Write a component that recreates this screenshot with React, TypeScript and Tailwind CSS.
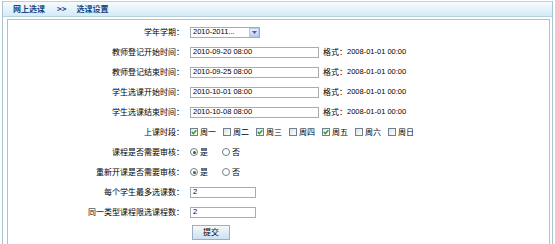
const CN = "font-['SimSun','Noto_Sans_CJK_SC',sans-serif]";
const NUM = "font-['Liberation_Sans',sans-serif]";

const days = [
  { name: "周一", on: true },
  { name: "周二", on: false },
  { name: "周三", on: true },
  { name: "周四", on: false },
  { name: "周五", on: true },
  { name: "周六", on: false },
  { name: "周日", on: false },
];

const Box = ({ on }: { on: boolean }) => (
  <span className="inline-flex items-center justify-center w-[8px] h-[8px] border border-[#6f8190] bg-gradient-to-br from-[#e2e2dc] to-white">
    {on && (
      <svg width="6" height="6" viewBox="0 0 6 6">
        <path d="M0.8 3 L2.4 4.6 L5.3 1.2" stroke="#23a323" strokeWidth="1.4" fill="none" />
      </svg>
    )}
  </span>
);

const Radio = ({ on }: { on: boolean }) => (
  <span className="inline-flex items-center justify-center w-[8px] h-[8px] rounded-full border border-[#6f8190] bg-white">
    {on && <span className="w-[3px] h-[3px] rounded-full bg-[#2d6a2d]" />}
  </span>
);

const TextBox = ({ value, w = "w-[129px]" }: { value: string; w?: string }) => (
  <div className={`${w} h-[11px] border border-[#a5acb2] bg-white pl-[2px] flex items-center whitespace-nowrap text-[7.5px] leading-none text-black ${NUM}`}>
    {value}
  </div>
);

const Row = ({ label, children }: { label: string; children: React.ReactNode }) => (
  <div className="flex items-center h-[20px] whitespace-nowrap">
    <div className="w-[176px] text-right text-[8px] leading-none text-black">{label}</div>
    <div className="ml-[6px] flex items-center">{children}</div>
  </div>
);

const TimeRow = ({ label, value }: { label: string; value: string }) => (
  <Row label={label}>
    <TextBox value={value} />
    <span className="ml-[4px] text-[8px] leading-none">格式：</span>
    <span className={`text-[7.5px] leading-none ${NUM}`}>2008-01-01 00:00</span>
  </Row>
);

const YesNo = () => (
  <>
    <span className="flex items-center text-[8px] leading-none">
      <Radio on />
      <span className="ml-[2px]">是</span>
    </span>
    <span className="flex items-center text-[8px] leading-none ml-[14px]">
      <Radio on={false} />
      <span className="ml-[2px]">否</span>
    </span>
  </>
);

export default function App() {
  return (
    <div className={`w-[555px] h-[244px] bg-white overflow-hidden ${CN}`}>
      <div className="ml-[2px] w-[551px] h-full border-l border-r border-[#a8c4cf]">
        {/* header */}
        <div className="mt-[1px] h-[16px] border-t border-b border-[#b7d3de] bg-gradient-to-b from-[#f7fbfd] to-[#d4ebf6] flex items-center pl-[10px] text-[8px] leading-none font-bold text-[#1b4680]">
          <span>网上选课</span>
          <span className="ml-[12px]">&gt;&gt;</span>
          <span className="ml-[10px]">选课设置</span>
        </div>
        {/* content */}
        <div className="mt-[2px] ml-[4px] w-[543px] h-full border border-[#a8c4cf] pt-[2px]">
          <Row label="学年学期：">
            <div className="w-[70px] h-[11px] border border-[#a5acb2] bg-white flex items-center">
              <span className={`flex-1 pl-[2px] text-[7.5px] leading-none ${NUM}`}>2010-2011...</span>
              <span className="w-[10px] h-[9px] bg-gradient-to-b from-[#e9f0fc] to-[#bccff3] border border-[#b4c8ee] flex items-center justify-center">
                <svg width="5" height="3" viewBox="0 0 5 3">
                  <path d="M0 0h5L2.5 3z" fill="#4d6185" />
                </svg>
              </span>
            </div>
          </Row>
          <TimeRow label="教师登记开始时间：" value="2010-09-20 08:00" />
          <TimeRow label="教师登记结束时间：" value="2010-09-25 08:00" />
          <TimeRow label="学生选课开始时间：" value="2010-10-01 08:00" />
          <TimeRow label="学生选课结束时间：" value="2010-10-08 08:00" />
          <Row label="上课时段：">
            {days.map((d) => (
              <span key={d.name} className="flex items-center w-[33px] text-[8px] leading-none">
                <Box on={d.on} />
                <span className="ml-[2px]">{d.name}</span>
              </span>
            ))}
          </Row>
          <Row label="课程是否需要审核：">
            <YesNo />
          </Row>
          <Row label="重新开课是否需要审核：">
            <YesNo />
          </Row>
          <Row label="每个学生最多选课数：">
            <TextBox value="2" w="w-[66px]" />
          </Row>
          <Row label="同一类型课程限选课程数：">
            <TextBox value="2" w="w-[66px]" />
          </Row>
          <Row label="">
            <button className="ml-[2px] w-[38px] h-[15px] border border-[#98afc4] bg-gradient-to-b from-[#f5f9fd] to-[#cde0f0] text-[8px] leading-none text-black">
              提交
            </button>
          </Row>
        </div>
      </div>
    </div>
  );
}
